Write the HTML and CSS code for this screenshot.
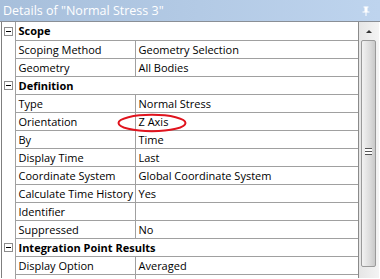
FILE: index.html
```html
<!DOCTYPE html>
<html lang="en">
<head>
  <meta charset="UTF-8">
  <title>Details of "Normal Stress 3"</title>
  <link rel="stylesheet" href="styles.css">
</head>
<body>
  <div class="panel">
    <div class="titlebar">
      <span class="title">Details of "Normal Stress 3"</span>
      <svg class="pin" width="8" height="10" viewBox="0 0 8 10">
        <path d="M1.5 0.5h5v1h-1v4h2v1h-3v3.5h-1v-3.5h-3v-1h2v-4h-1z" fill="#fff"/>
      </svg>
    </div>

    <div class="body">
      <div class="grid-wrap">
        <table class="details">
          <colgroup>
            <col class="c-gutter">
            <col class="c-name">
            <col class="c-value">
          </colgroup>
          <tr class="group"><td class="gutter"><span class="toggle"></span></td><td colspan="2">Scope</td></tr>
          <tr><td class="gutter"></td><td class="name">Scoping Method</td><td class="value">Geometry Selection</td></tr>
          <tr><td class="gutter"></td><td class="name">Geometry</td><td class="value">All Bodies</td></tr>
          <tr class="group"><td class="gutter"><span class="toggle"></span></td><td colspan="2">Definition</td></tr>
          <tr><td class="gutter"></td><td class="name">Type</td><td class="value">Normal Stress</td></tr>
          <tr><td class="gutter"></td><td class="name">Orientation</td><td class="value">Z Axis</td></tr>
          <tr><td class="gutter"></td><td class="name">By</td><td class="value">Time</td></tr>
          <tr><td class="gutter"></td><td class="name">Display Time</td><td class="value">Last</td></tr>
          <tr><td class="gutter"></td><td class="name">Coordinate System</td><td class="value">Global Coordinate System</td></tr>
          <tr><td class="gutter"></td><td class="name">Calculate Time History</td><td class="value">Yes</td></tr>
          <tr><td class="gutter"></td><td class="name">Identifier</td><td class="value"></td></tr>
          <tr><td class="gutter"></td><td class="name">Suppressed</td><td class="value">No</td></tr>
          <tr class="group"><td class="gutter"><span class="toggle"></span></td><td colspan="2">Integration Point Results</td></tr>
          <tr><td class="gutter"></td><td class="name">Display Option</td><td class="value">Averaged</td></tr>
          <tr><td class="gutter"></td><td class="name"></td><td class="value"></td></tr>
        </table>
        <!-- red mark drawn over the Orientation value -->
        <svg class="mark" width="74" height="20" viewBox="0 0 74 20">
          <ellipse cx="36" cy="10" rx="33.5" ry="8.2" fill="none" stroke="#e0141e" stroke-width="2"/>
        </svg>
      </div>

      <div class="scrollbar">
        <div class="arrow"></div>
        <div class="thumb"><span class="grip"></span></div>
      </div>
    </div>
  </div>
</body>
</html>
```

FILE: styles.css
```css
* {
  box-sizing: border-box;
}
body {
  margin: 0;
  background: #fff;
  font-family: "Open Sans", "Liberation Sans", sans-serif;
  font-size: 11px;
  color: #000;
  overflow: hidden;
}
.panel {
  width: 380px;
  height: 279px;
  overflow: hidden;
}
.titlebar {
  height: 22px;
  background: linear-gradient(to right, #a7bfdb, #bed4ee);
  border-bottom: 1px solid #8a8f96;
  display: flex;
  align-items: center;
  justify-content: space-between;
  padding: 0 10px 0 3px;
}
.title {
  color: #fff;
  font-size: 12.5px;
}
.pin {
  display: block;
}
.body {
  display: flex;
  height: 256px;
}
.grid-wrap {
  position: relative;
  width: 358px;
  border-left: 1px solid #7f7f7f;
  margin-left: 1px;
  border-right: 1px solid #8a8a8a;
}
.details {
  border-collapse: collapse;
  width: 356px;
  table-layout: fixed;
}
.c-gutter {
  width: 13px;
}
.c-name {
  width: 120px;
}
.details td {
  height: 18px;
  padding: 0 0 0 3px;
  border-bottom: 1px solid #a0a0a0;
  white-space: nowrap;
  overflow: hidden;
  line-height: 17px;
}
.details td.gutter {
  padding: 0;
  border-bottom: none;
  border-right: 1px solid #a0a0a0;
  vertical-align: middle;
}
.details td.name {
  border-right: 1px solid #a0a0a0;
}
.group td {
  font-weight: bold;
}
.toggle {
  display: block;
  position: relative;
  width: 9px;
  height: 9px;
  margin-left: 2px;
  border: 1px solid #8c8c8c;
  background: #fff;
}
.toggle::after {
  content: "";
  position: absolute;
  left: 1px;
  top: 3px;
  width: 5px;
  height: 1px;
  background: #000;
}
.mark {
  position: absolute;
  left: 114px;
  top: 91px;
}
.scrollbar {
  width: 20px;
  background: linear-gradient(to right, #e6e6e6, #f4f4f4);
  position: relative;
  padding: 18px 3px 0 2px;
}
.arrow {
  position: absolute;
  left: 7px;
  top: 8px;
  width: 0;
  height: 0;
  border-left: 3px solid transparent;
  border-right: 3px solid transparent;
  border-bottom: 3px solid #333;
}
.thumb {
  height: 227px;
  border: 1px solid #9a9a9a;
  border-radius: 2px;
  background: linear-gradient(to right, #f2f2f2, #dcdcdc 60%, #c9c9c9);
  display: flex;
  align-items: center;
  justify-content: center;
}
.grip {
  display: block;
  width: 7px;
  height: 7px;
  margin-top: -4px;
  border-top: 1px solid #555;
  border-bottom: 1px solid #555;
  background: linear-gradient(#fff 0, #fff 2px, #555 2px, #555 3px, #fff 3px);
}
```
